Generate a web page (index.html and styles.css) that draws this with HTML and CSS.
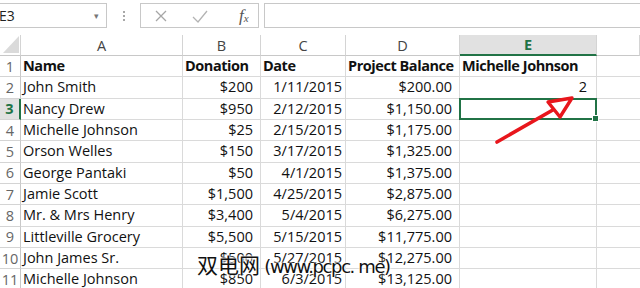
FILE: index.html
```html
<!DOCTYPE html>
<html>
<head>
<meta charset="utf-8">
<link rel="stylesheet" href="styles.css">
</head>
<body>
<div class="topbar">
  <div class="namebox"><span class="nb-text">E3</span><span class="nb-arrow">&#9662;</span></div>
  <div class="dots"><i></i><i></i><i></i></div>
  <div class="fxbox">
    <svg class="ico" width="16" height="16" viewBox="0 0 16 16"><path d="M3 3 L13 13 M13 3 L3 13" stroke="#a6a6a6" stroke-width="1.3" fill="none"/></svg>
    <svg class="ico" width="18" height="16" viewBox="0 0 18 16"><path d="M2 9 L7 14 L16 3" stroke="#b3b3b3" stroke-width="1.3" fill="none"/></svg>
    <span class="fx">f<sub>x</sub></span>
  </div>
  <div class="formula"></div>
</div>

<div class="sheet">
  <div class="h corner"><svg width="16" height="17" viewBox="0 0 16 17"><polygon points="16,0 16,17 0,17" fill="#dadada"/></svg></div>
  <div class="h col">A</div>
  <div class="h col">B</div>
  <div class="h col">C</div>
  <div class="h col">D</div>
  <div class="h col sel">E</div>
  <div class="h col last"></div>

  <div class="h row">1</div>
  <div class="c b">Name</div><div class="c b">Donation</div><div class="c b">Date</div><div class="c b">Project Balance</div><div class="c b">Michelle Johnson</div><div class="c last"></div>

  <div class="h row">2</div>
  <div class="c">John Smith</div><div class="c r m">$200</div><div class="c r d">1/11/2015</div><div class="c r m">$200.00</div><div class="c r n">2</div><div class="c last"></div>

  <div class="h row rsel">3</div>
  <div class="c">Nancy Drew</div><div class="c r m">$950</div><div class="c r d">2/12/2015</div><div class="c r m">$1,150.00</div><div class="c active"><span class="handle"></span></div><div class="c last"></div>

  <div class="h row">4</div>
  <div class="c">Michelle Johnson</div><div class="c r m">$25</div><div class="c r d">2/15/2015</div><div class="c r m">$1,175.00</div><div class="c"></div><div class="c last"></div>

  <div class="h row">5</div>
  <div class="c">Orson Welles</div><div class="c r m">$150</div><div class="c r d">3/17/2015</div><div class="c r m">$1,325.00</div><div class="c"></div><div class="c last"></div>

  <div class="h row">6</div>
  <div class="c">George Pantaki</div><div class="c r m">$50</div><div class="c r d">4/1/2015</div><div class="c r m">$1,375.00</div><div class="c"></div><div class="c last"></div>

  <div class="h row">7</div>
  <div class="c">Jamie Scott</div><div class="c r m">$1,500</div><div class="c r d">4/25/2015</div><div class="c r m">$2,875.00</div><div class="c"></div><div class="c last"></div>

  <div class="h row">8</div>
  <div class="c">Mr. &amp; Mrs Henry</div><div class="c r m">$3,400</div><div class="c r d">5/4/2015</div><div class="c r m">$6,275.00</div><div class="c"></div><div class="c last"></div>

  <div class="h row">9</div>
  <div class="c">Littleville Grocery</div><div class="c r m">$5,500</div><div class="c r d">5/15/2015</div><div class="c r m">$11,775.00</div><div class="c"></div><div class="c last"></div>

  <div class="h row">10</div>
  <div class="c">John James Sr.</div><div class="c r m">$500</div><div class="c r d">5/27/2015</div><div class="c r m">$12,275.00</div><div class="c"></div><div class="c last"></div>

  <div class="h row">11</div>
  <div class="c">Michelle Johnson</div><div class="c r m">$850</div><div class="c r d">6/3/2015</div><div class="c r m">$13,125.00</div><div class="c"></div><div class="c last"></div>
</div>

<svg class="arrow" width="640" height="288" viewBox="0 0 640 288">
  <path d="M497 142 L558 107" stroke="#e8161c" stroke-width="3.6" stroke-linecap="round" fill="none"/>
  <polygon points="548,102 572,98 560,117" fill="#fff" stroke="#e8161c" stroke-width="3.4" stroke-linejoin="round"/>
</svg>

<div class="watermark"><span class="cn">双电网</span><span class="lat"> (www.pcpc. me)</span></div>
</body>
</html>
```

FILE: styles.css
```css
html, body {
  margin: 0;
  padding: 0;
}
body {
  width: 640px;
  height: 288px;
  overflow: hidden;
  background: #fff;
  font-family: "Open Sans", "Liberation Sans", sans-serif;
  position: relative;
  color: #1a1a1a;
}
.topbar {
  height: 35px;
  box-sizing: border-box;
  padding-top: 3px;
  display: flex;
  align-items: flex-start;
}
.namebox {
  width: 107px;
  height: 25px;
  box-sizing: border-box;
  border: 1px solid #c8c8c8;
  border-left: none;
  display: flex;
  align-items: center;
  justify-content: space-between;
  padding-right: 7px;
  font-size: 14px;
}
.nb-text {
  margin-left: -1px;
  color: #222;
}
.nb-arrow {
  font-size: 9px;
  color: #777;
}
.dots {
  width: 33px;
  height: 25px;
  display: flex;
  flex-direction: column;
  align-items: center;
  justify-content: center;
  gap: 2px;
}
.dots i {
  display: block;
  width: 2px;
  height: 2px;
  background: #a8a8a8;
}
.fxbox {
  width: 119px;
  height: 25px;
  box-sizing: border-box;
  border: 1px solid #c8c8c8;
  display: flex;
  align-items: center;
  padding-left: 12px;
  gap: 22px;
}
.ico {
  display: block;
}
.fx {
  font-family: "Liberation Serif", serif;
  font-style: italic;
  font-size: 17px;
  color: #555;
  margin-left: 8px;
  line-height: 1;
}
.fx sub {
  font-size: 11px;
  vertical-align: -1px;
}
.formula {
  flex: 1;
  margin-left: 5px;
  height: 25px;
  box-sizing: border-box;
  border: 1px solid #c8c8c8;
  border-right: none;
}

.sheet {
  display: grid;
  grid-template-columns: 21px 162px 78px 85px 114px 137px 43px;
  grid-template-rows: 21px repeat(11, 21.33px);
  font-size: 14.5px;
}
.h {
  box-sizing: border-box;
  border-right: 1px solid #d4d4d4;
  border-bottom: 1px solid #d4d4d4;
  color: #555;
  display: flex;
  align-items: center;
  justify-content: center;
  background: #fff;
}
.corner {
  align-items: flex-end;
  justify-content: flex-end;
  padding: 0 1px 2px 0;
  border-bottom-color: #c8c8c8;
}
.col {
  border-bottom-color: #c8c8c8;
  font-size: 14.5px;
  color: #444;
}
.col.sel {
  background: #e1e1e1;
  color: #217346;
  font-weight: 700;
  border-bottom: 2px solid #217346;
}
.row {
  font-size: 14.5px;
  color: #666;
  border-right-color: #c8c8c8;
}
.row.rsel {
  background: #e1e1e1;
  color: #217346;
  font-weight: 700;
  border-right: 2px solid #217346;
}
.c {
  box-sizing: border-box;
  border-right: 1px solid #dadada;
  border-bottom: 1px solid #dadada;
  display: flex;
  align-items: center;
  padding-left: 2px;
  white-space: nowrap;
  overflow: visible;
  line-height: 1;
  color: #111;
}
.c.b {
  font-weight: 700;
  letter-spacing: -0.45px;
}
.c.r {
  justify-content: flex-end;
}
.c.m {
  padding-right: 7px;
}
.c.d {
  padding-right: 3px;
}
.c.n {
  padding-right: 9px;
}
.c.last {
  border-right: none;
}
.c.active {
  position: relative;
  border: 2px solid #217346;
  margin: -1px 0 0 -1px;
}
.handle {
  position: absolute;
  right: -4px;
  bottom: -4px;
  width: 5px;
  height: 5px;
  background: #217346;
  border: 1px solid #fff;
}
.arrow {
  position: absolute;
  left: 0;
  top: 0;
  pointer-events: none;
}
.watermark {
  position: absolute;
  left: 197px;
  top: 252px;
  font-size: 21px;
  line-height: 1.2;
  color: #111;
  white-space: nowrap;
  text-shadow: 0 0 2px #fff, 0 0 2px #fff, 0 0 3px #fff;
}
.watermark .cn {
  font-family: "Noto Sans CJK SC", sans-serif;
}
.watermark .lat {
  font-family: "DejaVu Sans", "Noto Sans CJK SC", sans-serif;
  font-size: 18px;
  letter-spacing: -1.4px;
}
```
